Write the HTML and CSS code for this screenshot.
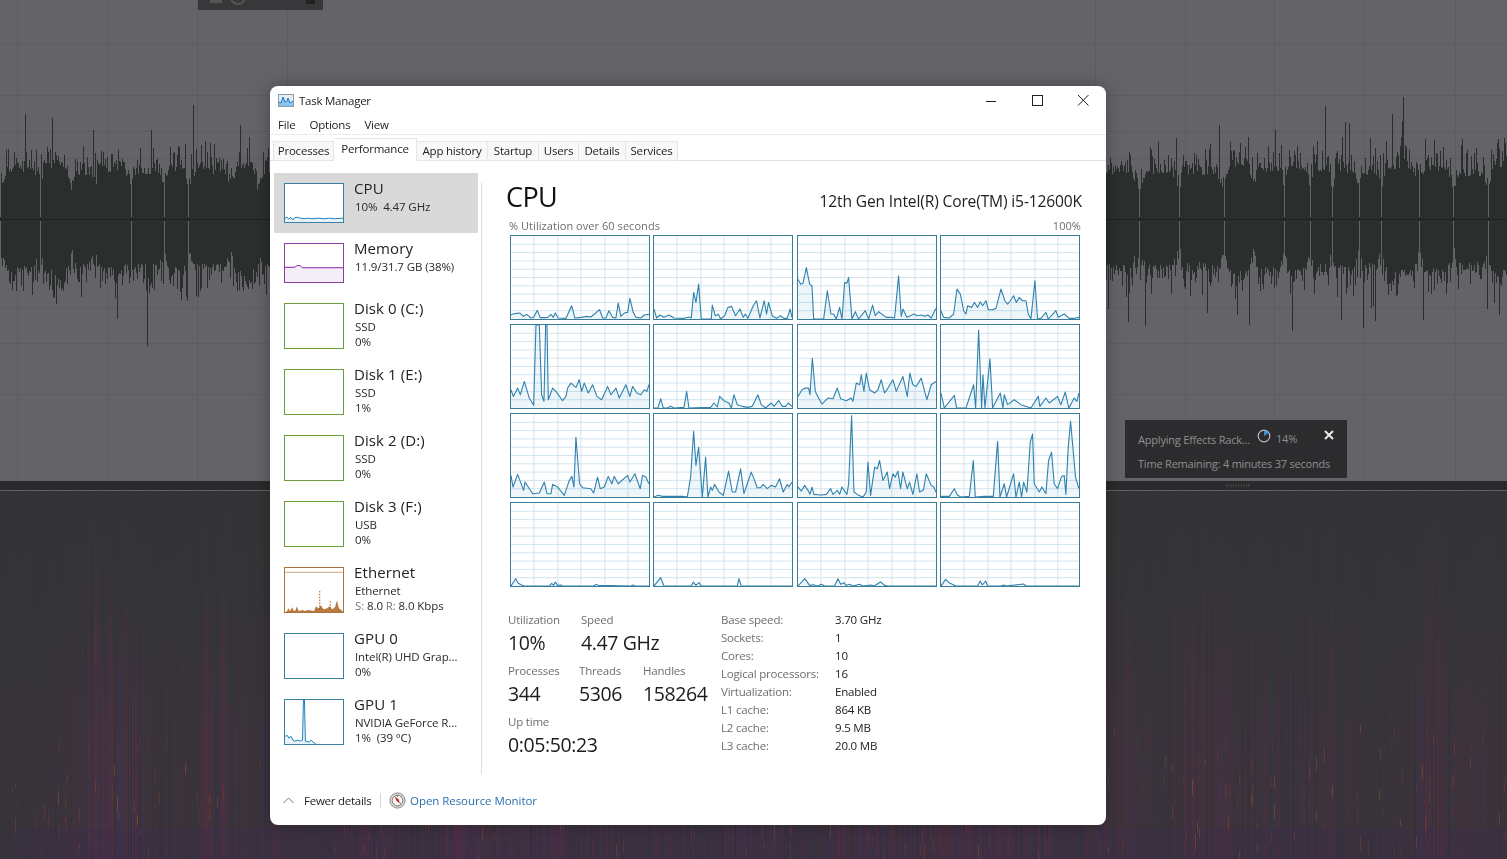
FILE: index.html
```html
<!DOCTYPE html>
<html lang="en">
<head>
<meta charset="utf-8">
<title>Task Manager</title>
<link rel="stylesheet" href="styles.css">
</head>
<body>
<div class="desktop">
  <canvas class="backdrop" id="backdrop" width="1507" height="859"></canvas>
  <div class="top-fragment">
    <svg width="125" height="10" viewBox="0 0 125 10"><circle cx="40" cy="-3" r="7" fill="none" stroke="#555" stroke-width="2"/><rect x="12" y="0" width="12" height="3" fill="#555"/><rect x="108" y="0" width="9" height="4" fill="#222"/></svg>
  </div>

  <div class="toast">
    <div class="toast-line toast-first">
      <span class="toast-name">Applying Effects Rack...</span>
      <svg class="toast-spin" width="14" height="14" viewBox="0 0 14 14"><circle cx="7" cy="7" r="5.8" fill="none" stroke="#b9bcc2" stroke-width="1.2"/><path d="M7 7 L7 1.4 A5.6 5.6 0 0 1 11.7 4 Z" fill="#3f8fd6"/></svg>
      <span class="toast-pct">14%</span>
      <svg class="toast-close" width="10" height="10" viewBox="0 0 10 10"><path d="M1 1 L9 9 M9 1 L1 9" stroke="#e8e8e8" stroke-width="2"/></svg>
    </div>
    <div class="toast-line">Time Remaining: 4 minutes 37 seconds</div>
  </div>
  <div class="grip"></div>

  <main class="window">
    <header class="titlebar">
      <svg class="app-icon" width="16" height="13" viewBox="0 0 16 13"><rect x="0.5" y="0.5" width="15" height="12" fill="#e4eef6" stroke="#8d9aa6"/><path d="M1 12 L1 8 L3 9 L5 3 L7 8 L9 7 L10 4 L12 9 L15 7 L15 12 Z" fill="#8ec5ef"/><path d="M1 8 L3 9 L5 3 L7 8 L9 7 L10 4 L12 9 L15 7" fill="none" stroke="#1f78c4"/></svg>
      <span class="title-text">Task Manager</span>
      <div class="controls">
        <svg class="ctl" width="46" height="30" viewBox="0 0 46 30"><path d="M18 15.5 H28" stroke="#222"/></svg>
        <svg class="ctl" width="46" height="30" viewBox="0 0 46 30"><rect x="18.5" y="9.5" width="10" height="10" fill="none" stroke="#222"/></svg>
        <svg class="ctl" width="46" height="30" viewBox="0 0 46 30"><path d="M18 9 L28.500 19.500 M28.500 9 L18 19.500" stroke="#222"/></svg>
      </div>
    </header>
    <nav class="menu"><span>File</span><span>Options</span><span>View</span></nav>
    <div class="tabs">
      <span class="tab tab-1">Processes</span>
      <span class="tab tab-active">Performance</span>
      <span class="tab tab-3">App history</span>
      <span class="tab tab-4">Startup</span>
      <span class="tab tab-5">Users</span>
      <span class="tab tab-6">Details</span>
      <span class="tab tab-7">Services</span>
    </div>

    <div class="body">
      <aside class="sidebar">
        <div class="res res-short res-selected">
          <svg class="mini mini-short c-cpu" viewBox="0 0 60 40" preserveAspectRatio="none"><path d="M0 40 L0 36 L2 35 L4 37 L6 35 L8 38 L10 35.500 L13 35 L16 36 L20 36.500 L24 36 L28 36.500 L34 36 L40 36.500 L46 36 L52 36.500 L60 36 L60 40 Z" fill="#e8f2f8"/><path d="M0 36 L2 35 L4 37 L6 35 L8 38 L10 35.500 L13 35 L16 36 L20 36.500 L24 36 L28 36.500 L34 36 L40 36.500 L46 36 L52 36.500 L60 36" fill="none" stroke="#117dbb"/></svg>
          <div class="res-text"><div class="res-name">CPU</div><div class="res-sub">10%&nbsp; 4.47 GHz</div></div>
        </div>
        <div class="res res-short">
          <svg class="mini mini-short c-mem" viewBox="0 0 60 40" preserveAspectRatio="none"><path d="M0 40 L0 24.500 L10 24.500 L13 22.500 L16 23 L18 25 L60 25 L60 40 Z" fill="#f4eff6"/><path d="M0 24.500 L10 24.500 L13 22.500 L16 23 L18 25 L60 25" fill="none" stroke="#8b12ae"/></svg>
          <div class="res-text"><div class="res-name">Memory</div><div class="res-sub">11.9/31.7 GB (38%)</div></div>
        </div>
        <div class="res">
          <svg class="mini c-disk" viewBox="0 0 60 46"></svg>
          <div class="res-text"><div class="res-name">Disk 0 (C:)</div><div class="res-sub">SSD</div><div class="res-sub">0%</div></div>
        </div>
        <div class="res">
          <svg class="mini c-disk" viewBox="0 0 60 46"></svg>
          <div class="res-text"><div class="res-name">Disk 1 (E:)</div><div class="res-sub">SSD</div><div class="res-sub">1%</div></div>
        </div>
        <div class="res">
          <svg class="mini c-disk" viewBox="0 0 60 46"></svg>
          <div class="res-text"><div class="res-name">Disk 2 (D:)</div><div class="res-sub">SSD</div><div class="res-sub">0%</div></div>
        </div>
        <div class="res">
          <svg class="mini c-disk" viewBox="0 0 60 46"></svg>
          <div class="res-text"><div class="res-name">Disk 3 (F:)</div><div class="res-sub">USB</div><div class="res-sub">0%</div></div>
        </div>
        <div class="res">
          <svg class="mini c-net" viewBox="0 0 60 46"><path d="M0 4.500 H60" stroke="#c9a27e"/><path d="M0 46 L2 45 L3 42 L5 45 L7 41 L9 45 L11 44 L12 40 L14 45 L18 44 L20 45 L24 44 L30 45 L32 40 L33 41 L35 42 L37 39 L40 43 L44 42 L46 40 L49 43 L52 41 L54 34 L56 42 L60 45 L60 46 Z" fill="#b87a42"/><path d="M36 24 V44 M47 35 V44" stroke="#a74f01" stroke-dasharray="1.500 1.500" fill="none"/></svg>
          <div class="res-text"><div class="res-name">Ethernet</div><div class="res-sub">Ethernet</div><div class="res-sub"><span class="dim">S:</span> 8.0 <span class="dim">R:</span> 8.0 Kbps</div></div>
        </div>
        <div class="res">
          <svg class="mini c-cpu" viewBox="0 0 60 46"></svg>
          <div class="res-text"><div class="res-name">GPU 0</div><div class="res-sub">Intel(R) UHD Grap...</div><div class="res-sub">0%</div></div>
        </div>
        <div class="res">
          <svg class="mini c-cpu" viewBox="0 0 60 46"><path d="M0 46 L0 38 L2 37 L4 40 L6 38 L8 42 L10 43 L13 42 L16 43 L18 42 L19 0 L20 0 L21 43 L25 44 L27 42 L29 44 L32 46 Z" fill="#eaf3f9"/><path d="M0 38 L2 37 L4 40 L6 38 L8 42 L10 43 L13 42 L16 43 L18 42 L19 0 L20 0 L21 43 L25 44 L27 42 L29 44 L32 46" fill="none" stroke="#117dbb"/></svg>
          <div class="res-text"><div class="res-name">GPU 1</div><div class="res-sub">NVIDIA GeForce R...</div><div class="res-sub">1%&nbsp; (39 °C)</div></div>
        </div>
      </aside>

      <section class="detail">
        <div class="detail-head">
          <h1 class="big-title">CPU</h1>
          <div class="cpu-model">12th Gen Intel(R) Core(TM) i5-12600K</div>
        </div>
        <div class="graph-caption"><span>% Utilization over 60 seconds</span><span>100%</span></div>
        <div class="graphs" id="graphs"></div>

        <div class="stats">
          <div class="dyn">
            <div class="dyn-row">
              <div class="stat w-util"><div class="stat-label">Utilization</div><div class="stat-value">10%</div></div>
              <div class="stat"><div class="stat-label">Speed</div><div class="stat-value">4.47 GHz</div></div>
            </div>
            <div class="dyn-row">
              <div class="stat w-proc"><div class="stat-label">Processes</div><div class="stat-value">344</div></div>
              <div class="stat w-thr"><div class="stat-label">Threads</div><div class="stat-value">5306</div></div>
              <div class="stat"><div class="stat-label">Handles</div><div class="stat-value">158264</div></div>
            </div>
            <div class="dyn-row">
              <div class="stat"><div class="stat-label">Up time</div><div class="stat-value">0:05:50:23</div></div>
            </div>
          </div>
          <dl class="specs">
            <dt>Base speed:</dt><dd>3.70 GHz</dd>
            <dt>Sockets:</dt><dd>1</dd>
            <dt>Cores:</dt><dd>10</dd>
            <dt>Logical processors:</dt><dd>16</dd>
            <dt>Virtualization:</dt><dd>Enabled</dd>
            <dt>L1 cache:</dt><dd>864 KB</dd>
            <dt>L2 cache:</dt><dd>9.5 MB</dd>
            <dt>L3 cache:</dt><dd>20.0 MB</dd>
          </dl>
        </div>
      </section>
    </div>

    <footer class="footer">
      <svg class="chev" width="11" height="7" viewBox="0 0 11 7"><path d="M0.500 6 L5.500 1 L10.500 6" fill="none" stroke="#777"/></svg>
      <span class="fewer">Fewer details</span>
      <span class="foot-sep"></span>
      <svg class="monitor" width="17" height="17" viewBox="0 0 17 17"><circle cx="8.500" cy="8.500" r="7.600" fill="#dcd8d4" stroke="#8b8b8b"/><circle cx="8.500" cy="8.500" r="5.300" fill="#fbfbfb" stroke="#5a5a5a" stroke-width="0.800"/><path d="M5.200 4.200 L9.800 7.600 L10.800 11.800 L7.500 8.800 Z" fill="#c2202a"/><path d="M8.500 3.600 V5 M12 11.500 L11 10.600" stroke="#444" stroke-width="0.700"/></svg>
      <span class="link">Open Resource Monitor</span>
    </footer>
  </main>
</div>
<script src="script.js"></script>
</body>
</html>
```

FILE: styles.css
```css
* { box-sizing: border-box; }
html, body { margin: 0; padding: 0; height: 100%; overflow: hidden; background: #636368; }
body { font-family: "Open Sans", "Noto Sans", "Liberation Sans", sans-serif; font-size: 12px; color: #1c1c1c; }

.desktop { position: relative; width: 1507px; height: 859px; overflow: hidden; }
.backdrop { position: absolute; left: 0; top: 0; display: block; }

.top-fragment { position: absolute; left: 198px; top: 0; width: 125px; height: 10px; background: #38383a; }
.top-fragment svg { display: block; }

.toast { position: absolute; left: 1125px; top: 420px; width: 222px; height: 58px; background: #2c2c2e; color: #8f8f8f; font-size: 11px; letter-spacing: -0.2px; padding: 8px 13px; }
.toast-line { height: 24px; line-height: 24px; white-space: nowrap; }
.toast-first { position: relative; display: flex; }
.toast-spin { position: absolute; left: 119px; top: 1px; }
.toast-pct { position: absolute; left: 138px; top: -1px; }
.toast-close { position: absolute; left: 186px; top: 2px; }
.toast-name { display: block; }
.grip { position: absolute; left: 1225px; top: 484px; width: 25px; height: 3px; background-image: radial-gradient(#555 0.6px, transparent 0.8px); background-size: 2.5px 2px; }

.window { position: absolute; left: 270px; top: 86px; width: 836px; height: 739px; background: #fff; border-radius: 8px; box-shadow: 0 0 16px rgba(0,0,0,0.28); display: flex; flex-direction: column; overflow: hidden; }

.titlebar { height: 29px; flex: none; display: flex; align-items: center; padding-left: 8px; }
.app-icon { flex: none; margin-right: 5px; }
.title-text { font-size: 11.500px; letter-spacing: -0.25px; }
.controls { margin-left: auto; display: flex; }
.ctl { display: block; }

.menu { height: 20px; flex: none; display: flex; gap: 14px; align-items: center; padding-left: 8px; font-size: 11.500px; letter-spacing: -0.2px; border-bottom: 1px solid #ececec; }

.tabs { height: 26px; flex: none; display: flex; align-items: flex-end; padding-left: 3px; border-bottom: 1px solid #e2e2e2; }
.tab { height: 20px; line-height: 17px; margin-bottom: -1px; text-align: center; background: #f8f8f8; border: 1px solid #e6e6e6; border-left-width: 0; font-size: 11.500px; letter-spacing: -0.2px; color: #222; white-space: nowrap; }
.tab-1 { width: 61px; border-left-width: 1px; }
.tab-active { width: 83px; height: 23px; line-height: 20px; padding-bottom: 2px; background: #fff; border-bottom-color: #fff; }
.tab-3 { width: 71px; }
.tab-4 { width: 51px; }
.tab-5 { width: 40px; }
.tab-6 { width: 47px; }
.tab-7 { width: 52px; }

.body { flex: 1; display: flex; min-height: 0; }
.sidebar { width: 211px; flex: none; padding: 12px 4px 0 4px; }
.detail { flex: 1; margin-top: 22px; border-left: 1px solid #dcdcdc; height: 591px; padding: 0 24px 0 24px; min-width: 0; }

.res { height: 66px; display: flex; gap: 10px; padding: 10px 0 0 10px; width: 204px; }
.res-short { height: 60px; }
.res-selected { background: #d9d9d9; border-radius: 1px; }
.mini { width: 60px; height: 46px; flex: none; display: block; background: #fff; border: 1px solid; }
.mini-short { height: 40px; }
.c-cpu { border-color: #3b80a0; }
.c-mem { border-color: #8b3f9e; }
.c-disk { border-color: #6a9e3c; }
.c-net { border-color: #a8733c; }
.res-text { margin-top: -5px; min-width: 0; white-space: nowrap; }
.res-name { font-size: 15px; line-height: 20px; margin-bottom: 1px; letter-spacing: 0.1px; color: #222; }
.res-sub { font-size: 11.500px; line-height: 15px; padding-left: 1px; letter-spacing: -0.1px; color: #2a2a2a; }
.dim { color: #777; }

.detail-head { display: flex; justify-content: space-between; align-items: flex-end; height: 30px; margin: -1px 0 0 0; }
.big-title { margin: 0; font-size: 27px; line-height: 30px; font-weight: 400; letter-spacing: -0.6px; color: #111; }
.cpu-model { font-size: 15.600px; line-height: 20px; letter-spacing: -0.15px; color: #222; margin-bottom: 1px; }

.graph-caption { display: flex; justify-content: space-between; margin: 7px 1px 2px 3px; height: 14px; line-height: 14px; font-size: 11px; letter-spacing: 0.05px; color: #6d6d6d; }

.graphs { display: grid; grid-template-columns: repeat(4, 1fr); grid-auto-rows: 85px; gap: 4px 3.5px; width: 570px; margin-left: 4px; }
.graph { display: block; width: 100%; height: 100%; background: #fff; border: 1px solid #3b7d99; }
.g-grid { stroke: #d3e4ee; stroke-width: 1; vector-effect: non-scaling-stroke; shape-rendering: crispEdges; }
.g-fill { fill: #117dbb; fill-opacity: 0.07; stroke: none; }
.g-line { fill: none; stroke: #2f82ae; stroke-width: 1.100; vector-effect: non-scaling-stroke; stroke-linejoin: round; }

.stats { display: flex; margin: 25px 0 0 2px; }
.dyn { width: 213px; flex: none; }
.dyn-row { display: flex; height: 51px; }
.w-util { width: 73px; }
.w-proc { width: 71px; }
.w-thr { width: 64px; }
.stat-label { font-size: 11.500px; line-height: 16px; letter-spacing: -0.2px; color: #6e6e6e; }
.stat-value { font-size: 19.500px; line-height: 28px; margin-top: 1px; letter-spacing: -0.4px; color: #1c1c1c; white-space: nowrap; }

.specs { margin: 0; display: grid; grid-template-columns: 114px auto; grid-auto-rows: 18px; line-height: 16px; font-size: 11.500px; letter-spacing: -0.2px; }
.specs dt { color: #6e6e6e; }
.specs dd { margin: 0; color: #222; }

.footer { height: 40px; flex: none; display: flex; align-items: center; padding: 0 0 10px 13px; font-size: 11.500px; letter-spacing: -0.25px; }
.chev { flex: none; margin-right: 10px; }
.fewer { width: 76px; color: #1c1c1c; white-space: nowrap; }
.foot-sep { width: 1px; height: 15px; background: #d8d8d8; margin-right: 8px; }
.monitor { flex: none; margin-right: 4px; }
.link { color: #2a6fb0; white-space: nowrap; letter-spacing: -0.05px; }
```

FILE: script.js
```js
(function () {
  function rng(seed) {
    return function () {
      seed |= 0; seed = seed + 0x6D2B79F5 | 0;
      var t = Math.imul(seed ^ seed >>> 15, 1 | seed);
      t = t + Math.imul(t ^ t >>> 7, 61 | t) ^ t;
      return ((t ^ t >>> 14) >>> 0) / 4294967296;
    };
  }

  /* ---------- audio editor behind the window ---------- */
  var ctx = document.getElementById('backdrop').getContext('2d');
  var r = rng(42);
  ctx.fillStyle = '#636368';
  ctx.fillRect(0, 0, 1507, 481);

  ctx.fillStyle = '#5d5d60';
  [17, 107, 197, 287, 1095, 1185, 1274, 1364, 1455].forEach(function (x) { ctx.fillRect(x, 0, 1, 481); });
  [44, 95, 131, 158, 307, 343, 394].forEach(function (y) { ctx.fillRect(0, y, 1507, 1); });

  /* waveform */
  var wave = '#2a2f2e', cy = 219;
  ctx.fillStyle = wave;
  var x = 0;
  while (x < 1507) {
    var len = 22 + Math.floor(r() * 30);
    var peak = 43 + r() * 9;
    for (var i = 0; i < len && x < 1507; i++, x++) {
      var p = i / len;
      var env = Math.min(1, 0.6 + p * 2.5) * Math.min(1, 0.6 + (1 - p) * 2.2);
      var up = peak * env + r() * r() * 36;
      var dn = peak * env + r() * r() * 36;
      var k = r();
      if (k < 0.10) up += r() * 24;
      if (k > 0.90) dn += r() * 24;
      if (k < 0.03) up += 15 + r() * 30;
      if (k > 0.97) dn += 15 + r() * 30;
      if (i === 0 && r() < 0.8) { up = 2; dn = 2; }
      ctx.fillRect(x, Math.round(cy - up), 1, Math.round(up + dn));
    }
  }
  ctx.fillStyle = '#1e2120';
  ctx.fillRect(0, cy, 1507, 1);

  /* spectral panel */
  ctx.fillStyle = '#2a2a2c';
  ctx.fillRect(0, 481, 1507, 9);
  ctx.fillStyle = '#343436';
  ctx.fillRect(0, 491, 1507, 368);
  ctx.fillStyle = '#5f5f62';
  for (x = 0; x < 1507; x += 6) ctx.fillRect(x, 490, 3, 1);

  var burst = 0.6, left = 0;
  for (x = 0; x < 1507; x++) {
    if (left-- <= 0) { burst = 0.3 + r() * 0.7; left = 18 + r() * 40; }
    var pick = r();
    var start = 560 + r() * 150 - burst * 60;
    var col = pick < 0.5 ? '78,48,92' : pick < 0.85 ? '108,42,66' : '52,46,66';
    var a = (0.25 + r() * 0.5) * burst;
    var g = ctx.createLinearGradient(0, start, 0, 859);
    g.addColorStop(0, 'rgba(' + col + ',0)');
    g.addColorStop(0.35, 'rgba(' + col + ',' + (a * 0.7) + ')');
    g.addColorStop(1, 'rgba(' + col + ',' + a + ')');
    ctx.fillStyle = g;
    ctx.fillRect(x, start, 1, 859 - start);
    if (r() < 0.2 * burst + 0.03) {
      var n = 1 + Math.floor(r() * 2);
      for (var j = 0; j < n; j++) {
        var fy = 725 + r() * 130;
        ctx.fillStyle = 'rgba(' + (r() < 0.5 ? '165,95,48' : '145,60,50') + ',' + (0.15 + r() * 0.3) + ')';
        ctx.fillRect(x, fy, 1, 4 + r() * 12);
      }
    }
  }
  ctx.fillStyle = 'rgba(60,40,80,0.2)';
  ctx.fillRect(0, 828, 1507, 31);
  var edge = ctx.createLinearGradient(0, 0, 20, 0);
  edge.addColorStop(0, 'rgba(52,52,54,0.85)');
  edge.addColorStop(1, 'rgba(52,52,54,0)');
  ctx.fillStyle = edge;
  ctx.fillRect(0, 491, 20, 368);

  /* ---------- per-core graphs, traced as x,height in a 414x250 box ---------- */
  var cores = [
    [0,12,5,15,17,17,27,18,37,8,47,14,60,3,68,5,79,26,88,4,100,4,110,5,120,14,127,5,133,18,142,3,165,2,182,40,192,3,210,5,228,8,240,6,266,28,275,3,285,3,294,25,305,5,315,3,322,48,330,8,340,18,350,20,357,62,367,20,375,5,390,3,400,12,414,14],
    [0,30,8,3,18,12,30,5,45,12,60,3,90,2,105,6,112,3,119,80,126,50,134,105,142,0,172,0,175,42,184,10,194,14,200,0,212,10,222,35,233,38,245,10,258,30,268,5,274,15,282,2,298,40,308,55,318,3,331,55,338,15,344,50,355,10,368,2,380,10,390,2,400,2,409,30,414,5],
    [0,120,8,105,15,108,25,155,35,105,42,100,47,0,77,0,88,85,99,15,107,15,115,0,125,35,132,0,140,110,147,108,152,125,162,0,172,22,182,0,202,25,212,0,224,42,232,10,242,22,265,5,280,5,290,3,302,130,310,8,315,30,327,5,349,15,358,10,370,12,380,8,390,12,400,3,414,32],
    [0,25,8,5,25,3,38,15,48,90,58,75,68,25,75,15,80,40,92,35,100,50,110,35,118,52,125,40,135,55,142,28,155,28,165,32,180,90,192,55,200,45,208,55,218,70,226,50,235,65,245,55,255,55,262,15,270,0,282,115,290,0,300,2,315,20,322,0,345,25,352,5,370,15,385,2,400,2,414,5],
    [0,55,7,35,20,60,28,40,40,80,55,30,68,8,75,250,85,250,92,40,99,20,104,250,108,250,112,25,125,60,135,50,155,22,165,35,170,60,180,75,195,62,205,85,212,50,220,75,232,45,245,70,258,35,272,25,290,65,300,40,315,60,325,30,345,70,357,35,365,65,378,45,390,40,400,55,408,50,414,70],
    [0,0,12,0,20,28,28,0,40,0,50,5,60,0,90,2,98,50,105,0,170,2,180,15,190,3,197,35,210,22,225,15,232,0,240,40,250,10,265,5,280,2,295,5,312,40,322,10,335,0,352,15,360,5,375,22,385,5,395,5,403,15,414,5],
    [0,35,12,55,22,60,32,60,36,40,43,150,52,50,62,30,72,12,82,22,90,30,105,28,118,60,128,28,145,22,160,30,165,20,175,75,185,70,190,100,198,50,205,105,215,55,230,45,240,55,250,85,260,45,270,60,285,85,295,50,315,95,328,35,336,105,345,70,355,65,370,90,387,25,400,70,414,80],
    [0,45,10,0,40,38,47,0,75,0,98,70,104,0,113,235,122,0,126,100,132,0,147,148,155,0,178,45,186,0,190,40,200,10,220,25,240,10,270,0,292,35,297,5,315,30,325,15,350,35,360,10,373,48,384,0,400,30,408,20,414,45],
    [0,65,6,30,20,68,38,20,42,45,55,25,65,10,85,12,100,45,108,10,120,10,125,38,140,30,160,5,175,50,183,62,189,30,195,180,206,40,215,28,240,25,248,12,260,60,268,25,280,30,292,62,303,40,310,62,322,40,350,65,357,45,372,70,388,25,395,65,405,60,414,40],
    [0,0,12,5,25,2,50,2,75,2,85,2,100,0,110,60,119,198,126,95,134,150,145,0,155,120,162,0,170,30,175,20,182,38,195,15,208,5,224,78,235,15,245,15,260,85,270,10,280,40,292,75,302,50,310,28,320,28,328,38,340,25,352,35,365,30,377,55,388,15,400,38,405,30,414,45],
    [0,30,10,18,20,35,30,20,36,8,42,30,48,8,70,6,85,8,98,25,105,8,118,20,125,8,132,30,147,8,152,40,161,245,168,15,182,5,195,0,205,15,210,105,218,5,230,90,238,85,245,110,255,50,268,75,275,25,285,70,292,60,300,78,308,25,315,75,328,25,335,45,345,8,357,70,365,15,377,22,385,70,400,35,408,30,414,15],
    [0,2,25,2,40,25,50,5,60,0,85,2,97,110,103,0,130,2,157,2,170,168,177,0,190,40,197,0,218,70,225,0,235,45,242,0,248,45,258,15,268,165,275,190,280,40,295,15,303,30,315,10,323,110,332,135,340,40,350,25,362,62,370,65,375,8,382,150,389,228,404,60,414,25],
    [0,0,14,22,22,8,32,3,40,0,115,0,122,8,128,2,133,12,140,2,150,3,155,0,248,0,255,5,262,2,360,0,366,3,372,0,414,0],
    [0,0,20,25,30,0,112,0,118,12,126,2,135,10,142,0,250,0,255,22,262,0,414,0],
    [0,0,20,22,35,2,45,4,60,0,70,5,80,0,110,0,120,22,128,5,138,10,145,2,155,5,165,0,185,5,195,0,220,3,228,0,248,12,260,2,270,0,414,0],
    [0,0,14,20,24,10,34,5,45,0,110,0,118,15,124,3,134,15,140,0,180,0,188,3,198,0,248,6,255,0,414,0]
  ];
  var NS = 'http://www.w3.org/2000/svg';
  var host = document.getElementById('graphs');
  function el(name, attrs, parent) {
    var e = document.createElementNS(NS, name);
    for (var key in attrs) e.setAttribute(key, attrs[key]);
    parent.appendChild(e);
    return e;
  }
  cores.forEach(function (d) {
    var svg = el('svg', { 'class': 'graph', viewBox: '0 0 414 250', preserveAspectRatio: 'none' }, host);
    for (var h = 25; h < 250; h += 25) el('line', { 'class': 'g-grid', x1: 0, x2: 414, y1: h, y2: h }, svg);
    [69, 141, 210, 282, 351].forEach(function (v) { el('line', { 'class': 'g-grid', x1: v, x2: v, y1: 0, y2: 250 }, svg); });
    var pts = [];
    for (var n = 0; n < d.length; n += 2) pts.push(d[n] + ',' + (250 - d[n + 1]));
    el('polygon', { 'class': 'g-fill', points: '0,250 ' + pts.join(' ') + ' 414,250' }, svg);
    el('polyline', { 'class': 'g-line', points: pts.join(' ') }, svg);
  });
})();
```
